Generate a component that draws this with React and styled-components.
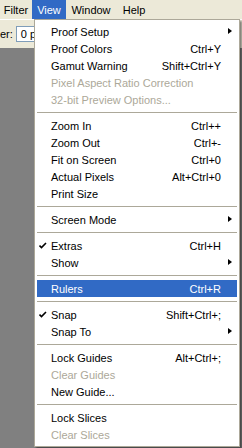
import React from 'react';
import styled, { createGlobalStyle } from 'styled-components';

const Global = createGlobalStyle`
  html, body { margin: 0; padding: 0; }
  body { font-family: Tahoma, "Liberation Sans", Arial, sans-serif; }
`;

const Screen = styled.div`
  position: relative;
  width: 242px;
  height: 448px;
  overflow: hidden;
  background: #808080;
  font-size: 11px;
`;

const MenuBar = styled.div`
  display: flex;
  height: 19px;
  background: #ece9d8;
`;

const BarItem = styled.div`
  display: flex;
  align-items: center;
  justify-content: center;
  width: ${p => p.$w}px;
  height: 19px;
  color: ${p => (p.$open ? '#fff' : '#000')};
  background: ${p => (p.$open ? '#316ac5' : 'transparent')};
`;

const Toolbar = styled.div`
  height: 28px;
  background: #ece9d8;
  border-top: 1px solid #fff;
  display: flex;
  align-items: center;
  gap: 3px;
`;

const FieldLabel = styled.span``;

const Field = styled.div`
  width: 40px;
  height: 14px;
  background: #fff;
  border: 1px solid #7f9db9;
  padding-left: 4px;
  line-height: 14px;
`;

const Dropdown = styled.div`
  position: absolute;
  left: 34px;
  top: 19px;
  width: 200px;
  background: #fff;
  border: 1px solid #aca899;
  padding: 3px 2px 3px;
  box-shadow: 2px 2px 2px rgba(0, 0, 0, 0.45);
`;

const Row = styled.div`
  position: relative;
  display: flex;
  align-items: center;
  height: 17px;
  padding: 0 16px 0 14px;
  color: ${p => (p.$disabled ? '#aca899' : p.$active ? '#fff' : '#000')};
  background: ${p => (p.$active ? '#316ac5' : 'transparent')};
`;

const Label = styled.span`
  flex: 1;
  white-space: nowrap;
`;

const Shortcut = styled.span`
  white-space: nowrap;
`;

const Check = styled.svg`
  position: absolute;
  left: 2px;
  top: 5px;
`;

const Arrow = styled.span`
  position: absolute;
  right: 5px;
  top: 5px;
  width: 0;
  height: 0;
  border-top: 3.5px solid transparent;
  border-bottom: 3.5px solid transparent;
  border-left: 4px solid #000;
`;

const Separator = styled.div`
  height: 9px;
  display: flex;
  align-items: center;
  &::after {
    content: '';
    flex: 1;
    height: 1px;
    background: #aca899;
  }
`;

const items = [
  { label: 'Proof Setup', sub: true },
  { label: 'Proof Colors', key: 'Ctrl+Y' },
  { label: 'Gamut Warning', key: 'Shift+Ctrl+Y' },
  { label: 'Pixel Aspect Ratio Correction', disabled: true },
  { label: '32-bit Preview Options...', disabled: true },
  '-',
  { label: 'Zoom In', key: 'Ctrl++' },
  { label: 'Zoom Out', key: 'Ctrl+-' },
  { label: 'Fit on Screen', key: 'Ctrl+0' },
  { label: 'Actual Pixels', key: 'Alt+Ctrl+0' },
  { label: 'Print Size' },
  '-',
  { label: 'Screen Mode', sub: true },
  '-',
  { label: 'Extras', key: 'Ctrl+H', checked: true },
  { label: 'Show', sub: true },
  '-',
  { label: 'Rulers', key: 'Ctrl+R', active: true },
  '-',
  { label: 'Snap', key: 'Shift+Ctrl+;', checked: true },
  { label: 'Snap To', sub: true },
  '-',
  { label: 'Lock Guides', key: 'Alt+Ctrl+;' },
  { label: 'Clear Guides', disabled: true },
  { label: 'New Guide...' },
  '-',
  { label: 'Lock Slices' },
  { label: 'Clear Slices', disabled: true },
];

export default function App() {
  return (
    <Screen>
      <Global />
      <MenuBar>
        <BarItem $w={32}>Filter</BarItem>
        <BarItem $w={34} $open>View</BarItem>
        <BarItem $w={50}>Window</BarItem>
        <BarItem $w={36}>Help</BarItem>
      </MenuBar>
      <Toolbar>
        <FieldLabel>er:</FieldLabel>
        <Field>0 px</Field>
      </Toolbar>
      <Dropdown>
        {items.map((it, i) =>
          it === '-' ? (
            <Separator key={i} />
          ) : (
            <Row key={i} $disabled={it.disabled} $active={it.active}>
              {it.checked && (
                <Check width="8" height="7" viewBox="0 0 8 7">
                  <polyline points="0.5,3.5 2.5,5.5 7,1" fill="none" stroke="#000" strokeWidth="1.6" />
                </Check>
              )}
              <Label>{it.label}</Label>
              {it.key && <Shortcut>{it.key}</Shortcut>}
              {it.sub && <Arrow />}
            </Row>
          )
        )}
      </Dropdown>
    </Screen>
  );
}
